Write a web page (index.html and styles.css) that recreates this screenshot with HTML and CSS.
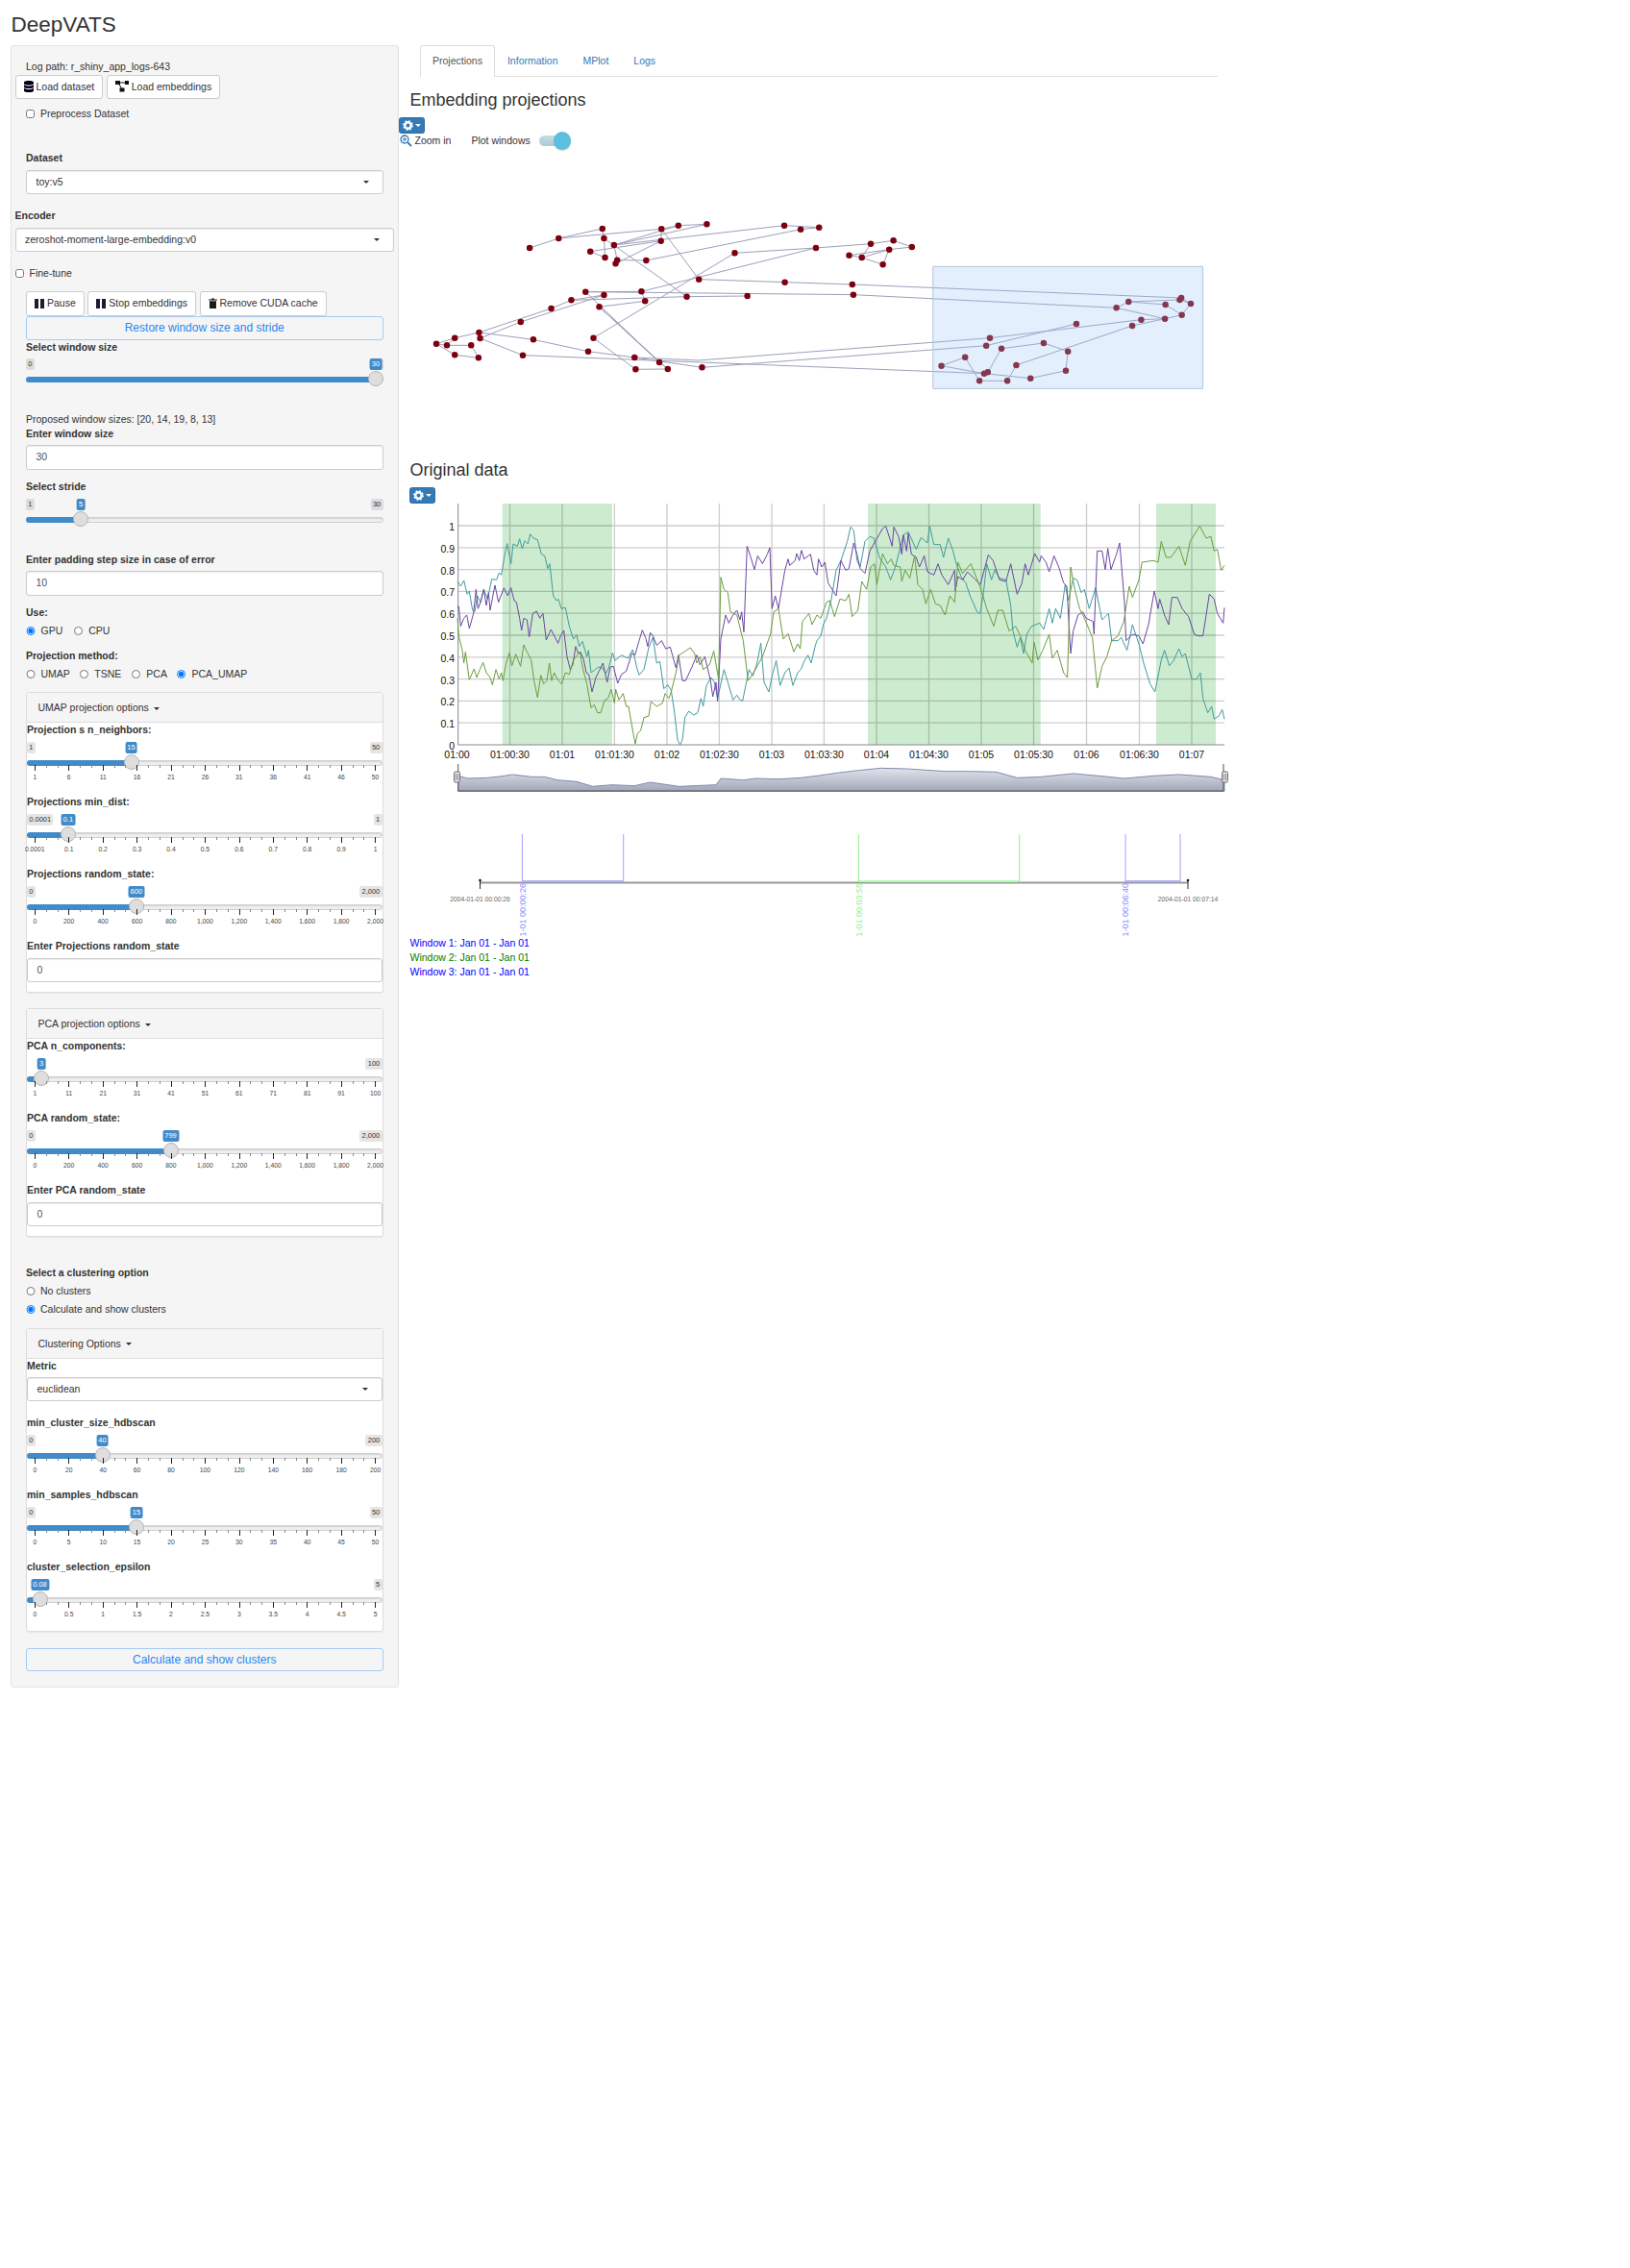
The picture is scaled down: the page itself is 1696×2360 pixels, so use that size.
FILE: index.html
```html
<!DOCTYPE html>
<html lang="en">
<head>
<meta charset="utf-8">
<title>DeepVATS</title>
<link rel="stylesheet" href="styles.css">
</head>
<body>
<h2 class="app-title">DeepVATS</h2>
<div class="layout">
<aside class="panel">
  <div class="text-row log">Log path: r_shiny_app_logs-643</div>
  <div class="btn-row r-load">
    <button class="btn"><svg class="ico" width="10" height="12" viewBox="0 0 10 12"><path d="M0 1.5C0 .5 2.500 0 5 0s5 .5 5 1.500V3c0 1-2.500 1.500-5 1.500S0 4 0 3zM0 4.300C1 5.200 3 5.500 5 5.500s4-.3 5-1.200V6.500c0 1-2.500 1.500-5 1.500S0 7.500 0 6.500zM0 7.800C1 8.700 3 9 5 9s4-.3 5-1.200V10.500c0 1-2.500 1.500-5 1.500s-5-.5-5-1.500z" fill="#00001a"/></svg>Load dataset</button>
    <button class="btn"><svg class="ico" width="14" height="12" viewBox="0 0 14 12"><path d="M3 2h8M3 2l4 7" stroke="#111" stroke-width="1" fill="none"/><rect x="0" y="0" width="5" height="4" fill="#111"/><rect x="10" y="0" width="4" height="4" fill="#111"/><rect x="4.500" y="7.500" width="5" height="4" fill="#111"/></svg>Load embeddings</button>
  </div>
  <label class="check indent r-prep"><input type="checkbox">Preprocess Dataset</label>
  <hr class="rule indent">
  <div class="lbl indent m145">Dataset</div>
  <div class="select indent m5"><span>toy:v5</span><i class="caret"></i></div>
  <div class="lbl m15">Encoder</div>
  <div class="select m5"><span>zeroshot-moment-large-embedding:v0</span><i class="caret"></i></div>
  <label class="check m15"><input type="checkbox">Fine-tune</label>
  <div class="btn-row indent r-actions">
    <button class="btn"><svg class="ico" width="10" height="10" viewBox="0 0 10 10"><path d="M0 0h4v10H0zM6 0h4v10H6z" fill="#1c1c2c"/></svg>Pause</button>
    <button class="btn"><svg class="ico" width="10" height="10" viewBox="0 0 10 10"><path d="M0 0h4v10H0zM6 0h4v10H6z" fill="#1c1c2c"/></svg>Stop embeddings</button>
    <button class="btn"><svg class="ico" width="9" height="11" viewBox="0 0 9 11"><path d="M0 1.500h3V.5h3v1h3v1H0zM1 3.200h7V11H1z" fill="#1c1c1c"/></svg>Remove CUDA cache</button>
  </div>
  <button class="btn-wide indent r-restore">Restore window size and stride</button>

  <div class="lbl indent">Select window size</div>
  <div class="irs indent h60">
    <span class="irs-min">0</span><span class="irs-max">30</span><span class="irs-val" style="left:364px">30</span>
    <div class="irs-track"><div class="irs-fill" style="width:364px"></div></div><span class="irs-handle" style="left:364px"></span>
  </div>
  <div class="text-row indent">Proposed window sizes: [20, 14, 19, 8, 13]</div>
  <div class="lbl indent">Enter window size</div>
  <div class="input indent m45">30</div>
  <div class="lbl indent m105">Select stride</div>
  <div class="irs indent h605">
    <span class="irs-min">1</span><span class="irs-max">30</span><span class="irs-val" style="left:57px">5</span>
    <div class="irs-track"><div class="irs-fill" style="width:57px"></div></div><span class="irs-handle" style="left:57px"></span>
  </div>
  <div class="lbl indent">Enter padding step size in case of error</div>
  <div class="input indent m45">10</div>
  <div class="lbl indent m105">Use:</div>
  <div class="radios indent m4">
    <label class="radio r-gpu"><input type="radio" name="use" checked>GPU</label>
    <label class="radio"><input type="radio" name="use">CPU</label>
  </div>
  <div class="lbl indent m11">Projection method:</div>
  <div class="radios indent m4">
    <label class="radio r-a"><input type="radio" name="pm">UMAP</label>
    <label class="radio r-b"><input type="radio" name="pm">TSNE</label>
    <label class="radio r-c"><input type="radio" name="pm">PCA</label>
    <label class="radio"><input type="radio" name="pm" checked>PCA_UMAP</label>
  </div>

  <section class="box indent b1">
    <div class="box-head">UMAP projection options<i class="caret small"></i></div>
    <div class="lbl">Projection s n_neighbors:</div>
    <div class="irs h60">
      <span class="irs-min">1</span><span class="irs-max">50</span><span class="irs-val" style="left:108.500px">15</span>
      <div class="irs-track"><div class="irs-fill" style="width:108px"></div></div><span class="irs-handle" style="left:108.500px"></span>
      <div class="irs-ticks"></div>
      <div class="irs-tl"><span>1</span><span>6</span><span>11</span><span>16</span><span>21</span><span>26</span><span>31</span><span>36</span><span>41</span><span>46</span><span>50</span></div>
    </div>
    <div class="lbl">Projections min_dist:</div>
    <div class="irs h60">
      <span class="irs-min">0.0001</span><span class="irs-max">1</span><span class="irs-val" style="left:43px">0.1</span>
      <div class="irs-track"><div class="irs-fill" style="width:43px"></div></div><span class="irs-handle" style="left:43px"></span>
      <div class="irs-ticks"></div>
      <div class="irs-tl"><span>0.0001</span><span>0.1</span><span>0.2</span><span>0.3</span><span>0.4</span><span>0.5</span><span>0.6</span><span>0.7</span><span>0.8</span><span>0.9</span><span>1</span></div>
    </div>
    <div class="lbl">Projections random_state:</div>
    <div class="irs h60">
      <span class="irs-min">0</span><span class="irs-max">2,000</span><span class="irs-val" style="left:114px">600</span>
      <div class="irs-track"><div class="irs-fill" style="width:114px"></div></div><span class="irs-handle" style="left:114px"></span>
      <div class="irs-ticks"></div>
      <div class="irs-tl"><span>0</span><span>200</span><span>400</span><span>600</span><span>800</span><span>1,000</span><span>1,200</span><span>1,400</span><span>1,600</span><span>1,800</span><span>2,000</span></div>
    </div>
    <div class="lbl">Enter Projections random_state</div>
    <div class="input in-box m45">0</div>
  </section>

  <section class="box indent b2">
    <div class="box-head">PCA projection options<i class="caret small"></i></div>
    <div class="lbl">PCA n_components:</div>
    <div class="irs h60">
      <span class="irs-max">100</span><span class="irs-val" style="left:15px">3</span>
      <div class="irs-track"><div class="irs-fill" style="width:15px"></div></div><span class="irs-handle" style="left:15px"></span>
      <div class="irs-ticks"></div>
      <div class="irs-tl"><span>1</span><span>11</span><span>21</span><span>31</span><span>41</span><span>51</span><span>61</span><span>71</span><span>81</span><span>91</span><span>100</span></div>
    </div>
    <div class="lbl">PCA random_state:</div>
    <div class="irs h60">
      <span class="irs-min">0</span><span class="irs-max">2,000</span><span class="irs-val" style="left:149.500px">799</span>
      <div class="irs-track"><div class="irs-fill" style="width:149px"></div></div><span class="irs-handle" style="left:149.500px"></span>
      <div class="irs-ticks"></div>
      <div class="irs-tl"><span>0</span><span>200</span><span>400</span><span>600</span><span>800</span><span>1,000</span><span>1,200</span><span>1,400</span><span>1,600</span><span>1,800</span><span>2,000</span></div>
    </div>
    <div class="lbl">Enter PCA random_state</div>
    <div class="input in-box m45">0</div>
  </section>

  <div class="lbl indent m295">Select a clustering option</div>
  <label class="radio-line indent m45"><input type="radio" name="cl">No clusters</label>
  <label class="radio-line indent m4"><input type="radio" name="cl" checked>Calculate and show clusters</label>

  <section class="box indent b3">
    <div class="box-head">Clustering Options<i class="caret small"></i></div>
    <div class="lbl">Metric</div>
    <div class="select in-box m45"><span>euclidean</span><i class="caret"></i></div>
    <div class="lbl m15">min_cluster_size_hdbscan</div>
    <div class="irs h60">
      <span class="irs-min">0</span><span class="irs-max">200</span><span class="irs-val" style="left:78.500px">40</span>
      <div class="irs-track"><div class="irs-fill" style="width:78px"></div></div><span class="irs-handle" style="left:78.500px"></span>
      <div class="irs-ticks"></div>
      <div class="irs-tl"><span>0</span><span>20</span><span>40</span><span>60</span><span>80</span><span>100</span><span>120</span><span>140</span><span>160</span><span>180</span><span>200</span></div>
    </div>
    <div class="lbl">min_samples_hdbscan</div>
    <div class="irs h60">
      <span class="irs-min">0</span><span class="irs-max">50</span><span class="irs-val" style="left:114px">15</span>
      <div class="irs-track"><div class="irs-fill" style="width:114px"></div></div><span class="irs-handle" style="left:114px"></span>
      <div class="irs-ticks"></div>
      <div class="irs-tl"><span>0</span><span>5</span><span>10</span><span>15</span><span>20</span><span>25</span><span>30</span><span>35</span><span>40</span><span>45</span><span>50</span></div>
    </div>
    <div class="lbl">cluster_selection_epsilon</div>
    <div class="irs h60">
      <span class="irs-max">5</span><span class="irs-val" style="left:13.500px">0.08</span>
      <div class="irs-track"><div class="irs-fill" style="width:13px"></div></div><span class="irs-handle" style="left:13.500px"></span>
      <div class="irs-ticks"></div>
      <div class="irs-tl"><span>0</span><span>0.5</span><span>1</span><span>1.5</span><span>2</span><span>2.5</span><span>3</span><span>3.5</span><span>4</span><span>4.5</span><span>5</span></div>
    </div>
  </section>
  <button class="btn-wide indent r-calc">Calculate and show clusters</button>
</aside>

<main class="main">
  <nav class="tabs">
    <a class="tab active">Projections</a><a class="tab">Information</a><a class="tab">MPlot</a><a class="tab">Logs</a>
  </nav>
  <h3 class="heading h-first">Embedding projections</h3>
  <button class="gear g-first"><svg width="11" height="11" viewBox="0 0 11 11"><circle cx="5.500" cy="5.500" r="3.200" fill="none" stroke="#fff" stroke-width="2.400"/><circle cx="5.500" cy="5.500" r="4.600" fill="none" stroke="#fff" stroke-width="1.600" stroke-dasharray="1.800 1.800"/></svg><i class="caret white"></i></button>
  <div class="toolbar">
    <svg class="mag" width="13" height="13" viewBox="0 0 13 13"><circle cx="5" cy="5" r="4" fill="#eef4fb" stroke="#337ab7" stroke-width="1.300"/><path d="M8 8l4 4" stroke="#337ab7" stroke-width="1.800"/><path d="M3 5h4M5 3v4" stroke="#337ab7" stroke-width="1"/></svg>
    <span class="zoom-text">Zoom in</span>
    <span class="plot-text">Plot windows</span>
    <span class="switch"><span class="knob"></span></span>
  </div>
  <svg class="chart proj" width="865" height="265" viewBox="415 160 865 265">
    <g transform="translate(420 30) scale(.54855 .33333)">
      <path class="edges" d="M239 684L294 654L377 624M294 654L489 625L521 614L575 610L399 675M521 614L399 675L722 614L788 620L753 626L460 723L405 722L399 675M489 625L488 662L402 733M354 695L488 662M354 695L382 714L380 654L377 624M380 654L537 836L652 834M489 625L560 782L723 791L851 798L1475 840M628 700L360 965L440 1063L501 1062L485 1041M628 700L782 684L451 820L345 821L853 830L1352 871M782 684L886 671L929 661L964 681L921 689L845 707L869 714L921 689L909 736L869 714L886 671M451 820L458 850L371 868L485 1041M371 868L501 1062M345 821L485 1041M318 847L537 836M318 847L280 873L143 948L97 965L62 983L97 1018L142 1027L128 988L82 988L97 965M380 831L222 915L145 966L226 1019L1101 1076M380 831L318 847M82 988L62 983M143 948L246 970L350 1007L438 1026L560 1035L1112 965M145 966L143 948M438 1026L566 1057L1105 989L1276 921M1112 965L1399 908L1444 905L1476 893L1445 861L1375 852L1352 871L1444 905L1382 927L1162 1050L1145 1099L1092 1099L1065 1025L1020 1052L1101 1076L1189 1091L1256 1067L1260 1007L1214 981L1134 998L1108 1072M1375 852L1472 846L1493 858L1476 893M1475 840L1493 858"/>
      <path class="dots" d="M239 684h0M294 654h0M377 624h0M489 625h0M521 614h0M575 610h0M380 654h0M399 675h0M354 695h0M382 714h0M405 722h0M402 733h0M460 723h0M488 662h0M722 614h0M753 626h0M788 620h0M628 700h0M782 684h0M886 671h0M929 661h0M964 681h0M921 689h0M845 707h0M869 714h0M909 736h0M560 782h0M723 791h0M851 798h0M345 821h0M451 820h0M380 831h0M318 847h0M458 850h0M537 836h0M652 834h0M853 830h0M371 868h0M280 873h0M222 915h0M143 948h0M97 965h0M145 966h0M62 983h0M82 988h0M128 988h0M97 1018h0M142 1027h0M226 1019h0M246 970h0M350 1007h0M360 965h0M438 1026h0M485 1041h0M440 1063h0M501 1062h0M566 1057h0M1475 840h0M1472 846h0M1493 858h0M1445 861h0M1375 852h0M1352 871h0M1476 893h0M1444 905h0M1399 908h0M1382 927h0M1276 921h0M1112 965h0M1105 989h0M1134 998h0M1214 981h0M1260 1007h0M1256 1067h0M1189 1091h0M1145 1099h0M1092 1099h0M1065 1025h0M1020 1052h0M1101 1076h0M1108 1072h0M1162 1050h0"/>
      <rect class="sel" x="1004" y="742" width="512" height="381"/>
    </g>
  </svg>
  <h3 class="heading h-second">Original data</h3>
  <button class="gear g-second"><svg width="11" height="11" viewBox="0 0 11 11"><circle cx="5.500" cy="5.500" r="3.200" fill="none" stroke="#fff" stroke-width="2.400"/><circle cx="5.500" cy="5.500" r="4.600" fill="none" stroke="#fff" stroke-width="1.600" stroke-dasharray="1.800 1.800"/></svg><i class="caret white"></i></button>
  <svg class="chart series" width="865" height="306" viewBox="415 524 865 306">
    <g class="shade">
      <rect x="522.700" y="524" width="114.300" height="251"/><rect x="903" y="524" width="179.700" height="251"/><rect x="1203" y="524" width="62" height="251"/>
    </g>
    <path class="grid" d="M477 547H1274M477 569.800H1274M477 592.600H1274M477 615.400H1274M477 638.200H1274M477 661H1274M477 683.800H1274M477 706.600H1274M477 729.400H1274M477 752.200H1274M530.500 524V775M585 524V775M639.400 524V775M694 524V775M748.400 524V775M803 524V775M857.400 524V775M912 524V775M966.500 524V775M1021 524V775M1075.500 524V775M1130.500 524V775M1185.500 524V775M1240 524V775"/>
    <path class="axis" d="M476.700 524V775H1274"/>
    <g class="y-labels">
      <text x="473" y="552">1</text><text x="473" y="574.500">0.9</text><text x="473" y="597.500">0.8</text><text x="473" y="620">0.7</text><text x="473" y="643">0.6</text><text x="473" y="666">0.5</text><text x="473" y="688.500">0.4</text><text x="473" y="711.500">0.3</text><text x="473" y="734">0.2</text><text x="473" y="757">0.1</text><text x="473" y="780">0</text>
    </g>
    <g class="x-labels">
      <text x="475.500" y="789">01:00</text><text x="530.500" y="789">01:00:30</text><text x="585" y="789">01:01</text><text x="639.400" y="789">01:01:30</text><text x="694" y="789">01:02</text><text x="748.400" y="789">01:02:30</text><text x="803" y="789">01:03</text><text x="857.400" y="789">01:03:30</text><text x="912" y="789">01:04</text><text x="966.500" y="789">01:04:30</text><text x="1021" y="789">01:05</text><text x="1075.500" y="789">01:05:30</text><text x="1130.500" y="789">01:06</text><text x="1185.500" y="789">01:06:30</text><text x="1240" y="789">01:07</text>
    </g>
    <g transform="translate(420 470) scale(.33333)">
      <polyline class="s teal" points="168,405 178,420 188,402 198,445 205,435 215,495 222,500 230,450 240,470 250,430 262,460 275,398 290,400 298,378 305,385 315,325 323,287 335,350 342,288 355,295 362,272 370,303 378,278 388,288 395,257 405,270 418,275 430,320 440,325 450,365 456,350 467,450 477,465 483,460 492,490 505,487 517,545 530,585 540,572 548,608 558,592 572,640 577,620 585,690 598,680 608,672 620,675 632,692 640,675 652,628 660,652 680,635 700,645 715,618 728,675 735,697 750,680 765,612 778,580 790,660 800,655 812,740 825,728 835,745 845,810 855,900 863,915 870,900 878,830 890,810 905,822 918,815 928,770 935,795 945,730 960,705 970,720 980,770 1000,680 1012,720 1028,775 1040,760 1050,775 1058,778 1078,680 1090,700 1103,660 1115,598 1125,720 1140,750 1150,700 1163,652 1175,730 1190,690 1203,675 1215,730 1230,690 1240,680 1250,655 1262,635 1272,660 1285,605 1290,590"/>
      <polyline class="s purple" points="168,482 172,483 178,545 188,520 197,510 205,552 218,505 226,430 232,490 240,470 250,430 258,480 265,440 270,495 285,417 296,470 313,425 325,450 335,425 345,465 352,470 362,520 368,558 375,520 385,525 392,578 403,505 415,498 425,520 435,505 445,588 460,555 470,575 482,598 490,575 500,558 510,640 520,680 528,665 537,608 545,630 552,625 562,650 570,690 578,695 588,750 600,705 610,685 622,660 635,720 645,672 655,670 668,723 680,695 695,685 712,630 722,635 735,590 745,557 755,580 762,608 770,565 778,575 790,605 805,590 818,615 832,610 850,675 858,635 870,715 880,715 900,672 915,635 925,665 940,640 958,715 965,765 975,720 980,780 990,585 1005,510 1015,535 1028,510 1040,495 1050,525 1055,500 1062,563 1072,295 1082,325 1095,368 1105,325 1120,350 1135,320 1143,300 1150,490 1160,450 1170,490 1190,370 1200,335 1205,355 1222,340 1227,318 1235,340 1242,308 1250,335 1270,320 1280,370 1290,385"/>
      <polyline class="s green" points="168,520 172,575 183,620 188,660 193,625 205,712 220,678 228,705 238,680 248,658 258,690 270,705 277,728 288,680 298,710 305,690 310,715 320,660 330,628 338,668 350,632 365,670 375,603 385,625 398,650 408,720 418,768 428,698 437,725 447,715 455,660 462,715 470,690 480,710 493,725 505,690 517,695 530,650 550,625 560,680 572,725 585,800 595,790 605,815 615,815 628,775 638,770 648,742 658,785 662,742 672,775 685,755 695,795 702,795 715,870 723,912 730,880 740,870 750,830 765,825 772,780 790,795 808,785 816,755 828,770 835,750 850,690 860,635 880,622 895,612 908,630 915,660 925,640 935,680 955,665 968,622 983,710 990,392 1000,430 1012,440 1020,500 1040,510 1060,590 1075,715 1095,685 1120,640 1130,612 1145,570 1155,500 1170,490 1185,585 1200,568 1218,625 1230,600 1238,615 1245,530 1265,505 1275,540 1290,510"/>
      <polyline class="s teal" points="1290,590 1302,575 1310,540 1320,520 1335,460 1350,370 1365,340 1385,280 1395,235 1405,245 1415,340 1425,360 1440,280 1455,265 1468,270 1485,330 1505,360 1520,400 1535,360 1560,260 1575,250 1600,305 1615,268 1635,285 1642,232 1655,290 1675,290 1685,330 1700,270 1715,310 1725,350 1740,390 1755,410 1768,450 1790,500 1800,505 1810,440 1820,350 1835,400 1845,370 1860,395 1880,400 1895,480 1902,560 1915,610 1925,580 1935,630 1945,570 1960,545 1985,535 1998,555 2015,490 2025,535 2035,490 2050,520 2065,415 2075,465 2090,395 2102,400 2115,440 2125,430 2140,490 2160,425 2180,525 2200,505 2210,590 2230,590 2240,580 2258,620 2275,540 2295,600 2310,660 2330,725 2345,750 2365,650 2375,620 2390,668 2402,655 2420,615 2430,640 2440,630 2460,710 2475,710 2487,690 2495,770 2510,815 2522,795 2530,835 2545,825 2555,805 2562,835"/>
      <polyline class="s purple" points="1290,385 1295,335 1305,360 1315,345 1325,410 1350,450 1365,340 1380,370 1390,365 1405,285 1415,320 1425,365 1440,380 1455,310 1475,275 1495,240 1505,232 1525,295 1530,235 1545,265 1555,320 1560,260 1570,310 1575,255 1585,320 1600,330 1610,360 1625,325 1635,375 1655,385 1668,350 1680,385 1700,415 1720,370 1722,435 1730,390 1745,400 1760,375 1780,395 1800,415 1825,322 1840,340 1860,400 1880,405 1895,350 1915,445 1930,410 1940,350 1950,385 1970,318 1985,345 1990,325 2005,345 2015,375 2030,325 2045,360 2060,410 2070,420 2082,630 2090,560 2105,510 2120,500 2130,520 2152,530 2155,570 2165,310 2180,310 2190,368 2198,302 2208,368 2225,320 2235,285 2250,470 2255,590 2275,570 2295,575 2308,600 2325,540 2343,435 2355,490 2360,460 2375,510 2388,540 2398,455 2415,455 2430,490 2450,515 2468,570 2480,575 2495,575 2515,445 2530,460 2540,505 2558,535 2562,487"/>
      <polyline class="s green" points="1290,510 1302,520 1320,470 1330,465 1345,515 1362,460 1380,465 1390,445 1400,515 1418,495 1430,405 1445,430 1458,360 1470,350 1477,415 1495,318 1510,350 1522,335 1530,355 1550,360 1555,405 1565,370 1580,395 1595,325 1605,415 1620,430 1630,475 1645,430 1660,475 1675,480 1690,510 1705,450 1720,470 1730,345 1745,380 1770,350 1795,410 1810,455 1820,490 1842,545 1855,495 1870,495 1890,560 1910,545 1925,575 1940,620 1962,660 1968,595 1980,650 1995,620 2015,570 2025,645 2040,620 2060,690 2072,705 2082,360 2095,430 2110,490 2125,520 2150,580 2165,738 2180,670 2195,640 2210,590 2230,575 2248,530 2265,420 2275,455 2295,400 2305,345 2340,340 2355,345 2365,280 2380,330 2395,330 2420,295 2440,355 2455,280 2485,232 2505,270 2520,265 2530,310 2540,305 2552,370 2562,355"/>
      <polygon class="nav-area" points="170,1060 170,1012 200,1020 260,1018 300,1014 340,1008 400,1015 440,1015 480,1025 540,1030 590,1045 650,1040 720,1043 770,1032 860,1045 975,1040 990,1020 1060,1025 1100,1020 1170,1022 1240,1018 1290,1012 1360,1002 1420,995 1490,988 1570,990 1690,998 1770,998 1850,1000 1915,1018 1990,1015 2090,1005 2170,1012 2250,1020 2340,1012 2420,1008 2520,1015 2562,1025 2562,1060"/>
    </g>
    <path class="nav-base" d="M476.700 795V823H1273V795"/>
    <g class="handle"><rect x="472.500" y="803" width="6" height="11" rx="1.500"/><path d="M474.500 805v7M476.500 805v7"/></g>
    <g class="handle"><rect x="1271.500" y="803" width="6" height="11" rx="1.500"/><path d="M1273.500 805v7M1275.500 805v7"/></g>
    <defs><linearGradient id="navg" x1="0" y1="0" x2="0" y2="1"><stop offset="0" stop-color="#e2e4ec"/><stop offset="1" stop-color="#a0a5b8"/></linearGradient></defs>
  </svg>
  <svg class="chart timeline" width="865" height="108" viewBox="415 868 865 108">
    <path class="tl-axis" d="M499.500 918.500H1236"/>
    <path class="tl-end" d="M499.500 915V925M1236 915V925"/>
    <circle class="tl-dot" cx="499.500" cy="916" r="1.300"/><circle class="tl-dot" cx="1236" cy="916" r="1.300"/>
    <rect class="w-blue" x="543.400" y="916" width="105.300" height="2"/><path class="l-blue" d="M543.400 868V918M648.700 868V918"/>
    <rect class="w-green" x="893.400" y="916" width="167.300" height="2"/><path class="l-green" d="M893.400 868V918M1060.700 868V918"/>
    <rect class="w-blue" x="1171" y="916" width="57" height="2"/><path class="l-blue" d="M1171 868V918M1228 868V918"/>
    <text class="t-tiny" x="499.500" y="938">2004-01-01 00:00:26</text>
    <text class="t-tiny" x="1236" y="938">2004-01-01 00:07:14</text>
    <text class="t-rot blue" transform="translate(546.500 919) rotate(-90)">1-01 00:00:26</text>
    <text class="t-rot green-t" transform="translate(896.500 919) rotate(-90)">1-01 00:03:55</text>
    <text class="t-rot blue" transform="translate(1174 919) rotate(-90)">1-01 00:06:40</text>
  </svg>
  <div class="win blue-text first-win">Window 1: Jan 01 - Jan 01</div>
  <div class="win green-text">Window 2: Jan 01 - Jan 01</div>
  <div class="win blue-text">Window 3: Jan 01 - Jan 01</div>
</main>
</div>
</body>
</html>
```
FILE: styles.css
```css
* { box-sizing: border-box; }
html, body { margin: 0; background: #fff; }
body { font-family: "Liberation Sans", Arial, sans-serif; font-size: 10.5px; line-height: 15px; color: #333; min-height: 2360px; }
.app-title { margin: 0; padding-left: 11.5px; height: 47px; font-size: 22.5px; line-height: 52px; font-weight: 500; }
.layout { display: flex; align-items: flex-start; }

.panel { width: 403.5px; margin-left: 11px; padding: 0 3.5px 15.5px; background: #f5f5f5; border: 1px solid #e3e3e3; border-radius: 3px; flex: none; }
.indent { margin-left: 11.5px; margin-right: 11.5px; }
.text-row { height: 15px; }
.log { margin-top: 14px; margin-left: 11.5px; }
.btn-row { display: flex; gap: 3.5px; }
.r-load { margin-top: .5px; }
.r-actions { margin-top: 11.5px; }
.btn { height: 25.5px; padding: 0 8px; display: inline-flex; align-items: center; gap: 3px; background: #fff; border: 1px solid #ccc; border-radius: 3px; font: inherit; color: #333; }
.btn-wide { display: block; height: 24.5px; width: calc(100% - 23px); padding: 0; background: transparent; border: 1px solid #a6cbf5; border-radius: 3px; font-family: inherit; font-size: 12px; color: #2a86f0; }
.r-restore { margin-top: .5px; }
.r-calc { margin-top: 16.5px; }
.ico { flex: none; }

.check { display: flex; align-items: center; height: 15px; gap: 6px; }
.check input { margin: 0; width: 9px; height: 9px; }
.r-prep { margin-top: 7.5px; }
.rule { border: 0; height: 1px; margin-top: 15.5px; margin-bottom: 0; background: #eee; }

.lbl { height: 15px; font-weight: 700; }
.m4 { margin-top: 4px; }
.m5 { margin-top: 5px; }
.m11 { margin-top: 11px; }
.m15 { margin-top: 15px; }
.m45 { margin-top: 4.5px; }
.m105 { margin-top: 10.5px; }
.m145 { margin-top: 14.5px; }
.m295 { margin-top: 29.5px; }

.select { height: 25px; display: flex; align-items: center; justify-content: space-between; padding: 0 14px 0 9.5px; background: #fff; border: 1px solid #ccc; border-radius: 3px; box-shadow: inset 0 1px 1px rgba(0,0,0,.075); color: #333; }
.input { height: 25.5px; display: flex; align-items: center; padding-left: 9.5px; background: #fff; border: 1px solid #ccc; border-radius: 3px; box-shadow: inset 0 1px 1px rgba(0,0,0,.075); color: #555; }
.caret { display: inline-block; width: 0; height: 0; border-left: 3px solid transparent; border-right: 3px solid transparent; border-top: 3px solid #333; }
.caret.small { margin-left: 5px; vertical-align: middle; }
.caret.white { border-top-color: #fff; }

.radios { display: flex; height: 15px; align-items: center; }
.radio { display: flex; align-items: center; gap: 6px; margin-right: 11px; }
.radio input, .radio-line input { margin: 0; width: 9.5px; height: 9.5px; flex: none; }
.r-gpu { margin-right: 11.5px; }
.r-a { margin-right: 10px; }
.r-b { margin-right: 10.5px; }
.r-c { margin-right: 10px; }
.radio-line { display: flex; align-items: center; gap: 5.5px; height: 15px; }

.box { background: #fff; border: 1px solid #ddd; border-radius: 3px; box-shadow: 0 1px 1px rgba(0,0,0,.05); }
.box-head { height: 31px; padding-left: 11.5px; line-height: 30px; background: #f5f5f5; border-bottom: 1px solid #ddd; }
.b1 { margin-top: 11px; height: 313px; }
.b2 { margin-top: 16px; height: 238px; }
.b3 { margin-top: 11.5px; height: 316.5px; }

.irs { position: relative; }
.h60 { height: 60px; }
.h605 { height: 60.5px; }
.irs-min, .irs-max, .irs-val { position: absolute; top: 4.5px; height: 12px; line-height: 11px; padding: 0 2.25px; font-size: 7.5px; border-radius: 2px; background: rgba(0,0,0,.1); color: #333; }
.irs-min { left: 0; }
.irs-max { right: 0; }
.irs-val { transform: translateX(-50%); background: #428bca; color: #fff; }
.irs-track { position: absolute; left: 0; right: 0; top: 23.5px; height: 6px; background: #eee; border: 1px solid #d0d0d0; border-radius: 3px; box-shadow: inset 0 1px 1px rgba(0,0,0,.1); }
.irs-fill { position: absolute; left: -1px; top: -1px; height: 6px; background: #428bca; border-radius: 3px 0 0 3px; }
.irs-handle { position: absolute; top: 17.5px; width: 16px; height: 16px; margin-left: -8px; background: #dedede; border: 1px solid #b5b5b5; border-radius: 50%; }
.irs-ticks { position: absolute; left: 8px; width: 355px; top: 29px; height: 6px; background-image: repeating-linear-gradient(90deg, #222 0 1px, transparent 1px 35.43px), repeating-linear-gradient(90deg, #888 0 1px, transparent 1px 11.81px); background-size: 100% 6px, 100% 3px; background-repeat: no-repeat; }
.irs-tl { position: absolute; left: 8.3px; width: 354.3px; top: 37px; display: flex; justify-content: space-between; font-size: 6.75px; line-height: 9px; color: #444; }
.irs-tl span { width: 0; display: flex; justify-content: center; white-space: nowrap; }

.main { flex: none; width: 865px; margin-left: .5px; }
.tabs { display: flex; margin-left: 22px; width: 830px; height: 32.5px; border-bottom: 1px solid #ddd; }
.tab { height: 32.5px; padding: 0 12px; line-height: 31px; color: #337ab7; border: 1px solid transparent; border-bottom: 0; }
.tab.active { color: #555; background: #fff; border-color: #ddd; border-radius: 3px 3px 0 0; }
.heading { margin: 0 0 0 11.5px; height: 20px; font-size: 18px; line-height: 20px; font-weight: 500; color: #333; }
.h-first { margin-top: 14.5px; }
.h-second { margin-top: 54px; }
.gear { display: flex; align-items: center; justify-content: center; gap: 2px; width: 27px; height: 16.5px; padding: 0; background: #337ab7; border: 1px solid #2e6da4; border-radius: 2.5px; }
.g-first { margin-top: 8px; }
.g-second { margin-top: 8px; margin-left: 11px; }
.toolbar { display: flex; align-items: center; height: 17px; margin-top: -1px; }
.mag { margin-left: 1px; flex: none; }
.zoom-text { margin-left: 2.5px; }
.plot-text { margin-left: 21px; }
.switch { position: relative; display: block; width: 33px; height: 11px; margin-left: 9.5px; background: linear-gradient(#c8dbe2, #a9cbd8); border-radius: 6px; }
.knob { position: absolute; right: 0; top: -4px; width: 18px; height: 19px; background: #5bc0de; border-radius: 50%; box-shadow: 0 1px 1px rgba(0,0,0,.2); }

.chart { display: block; }
.proj { margin-top: 5.5px; }
.edges { fill: none; stroke: #8b90ad; stroke-width: 1; opacity: .85; vector-effect: non-scaling-stroke; }
.dots { fill: none; stroke: #7d0010; stroke-width: 6.5; stroke-linecap: round; vector-effect: non-scaling-stroke; }
.sel { fill: rgba(156, 198, 248, .28); stroke: #b3c4dc; stroke-width: 1; vector-effect: non-scaling-stroke; }

.shade rect { fill: #cdeccf; }
.grid { fill: none; stroke: #000; stroke-opacity: .2; stroke-width: 1.3; }
.axis { fill: none; stroke: #888; stroke-width: 1; }
.y-labels text { font-size: 10.5px; text-anchor: end; fill: #111; }
.x-labels text { font-size: 10.5px; text-anchor: middle; fill: #111; }
.s { fill: none; stroke-width: 1; stroke-linejoin: round; vector-effect: non-scaling-stroke; }
.teal { stroke: #3f9a9e; }
.purple { stroke: #6b45a3; }
.green { stroke: #6a9c3e; }
.nav-area { fill: url(#navg); stroke: #7d8db0; stroke-width: 1; vector-effect: non-scaling-stroke; }
.nav-base { fill: none; stroke: #555; stroke-width: 1; }
.handle rect { fill: #eee; stroke: #666; stroke-width: 1; }
.handle path { fill: none; stroke: #666; stroke-width: .8; }

.timeline { margin-top: 38px; }
.tl-axis { stroke: #999; stroke-width: 2; }
.tl-end { stroke: #222; stroke-width: 1; }
.tl-dot { fill: #111; }
.w-blue { fill: #b0b0ff; }
.w-green { fill: #b0ffb0; }
.l-blue { fill: none; stroke: #a0a0ff; stroke-width: 1; }
.l-green { fill: none; stroke: #90f090; stroke-width: 1; }
.t-tiny { font-size: 6.75px; text-anchor: middle; fill: #666; }
.t-rot { font-size: 9px; text-anchor: end; }
.t-rot.blue { fill: #8c8cff; }
.t-rot.green-t { fill: #8cf58c; }
.win { margin-left: 11.5px; height: 15px; }
.first-win { margin-top: -2px; }
.blue-text { color: #0000ff; }
.green-text { color: #008000; }
```
